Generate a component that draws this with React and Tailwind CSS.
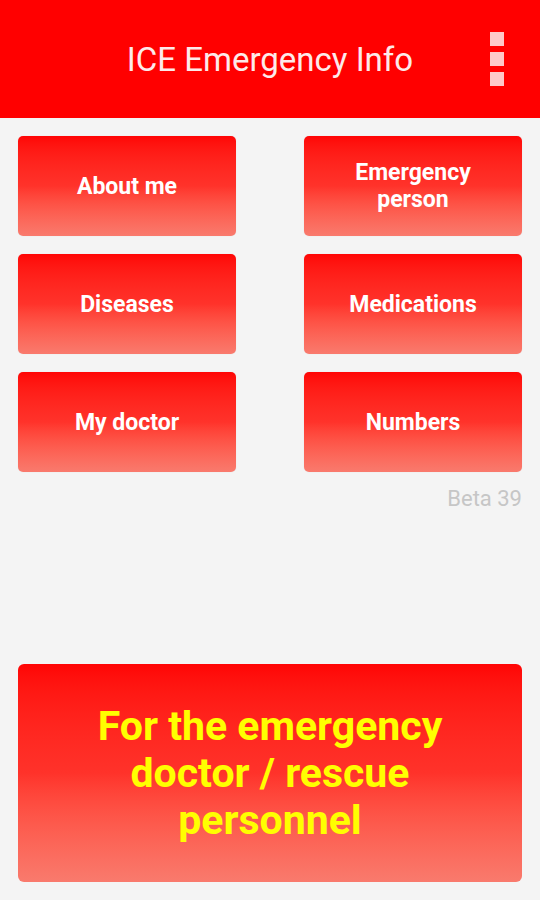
import React from "react";

function Btn({ children }) {
  return (
    <div className="h-[100px] rounded-[5px] bg-gradient-to-b from-[#ff0505] via-[#ff322a] via-[50%] to-[#f97a6d] flex items-center justify-center text-center text-white font-bold text-[23px] leading-[27px] shadow-[0_0_1px_rgba(0,0,0,0.15)]">
      {children}
    </div>
  );
}

export default function App() {
  return (
    <div className="w-[540px] h-[900px] bg-[#f4f4f4] flex flex-col" style={{ fontFamily: "Roboto, 'Noto Sans', sans-serif" }}>
      <div className="h-[118px] bg-[#ff0000] flex items-center relative shrink-0">
        <div className="flex-1 text-center text-[#fdeaea] text-[33px] pt-[2px]">ICE Emergency Info</div>
        <div className="absolute right-[36px] top-[32px] flex flex-col gap-[6px]">
          <div className="w-[14px] h-[14px] bg-[#ffc8c8]" />
          <div className="w-[14px] h-[14px] bg-[#ffc8c8]" />
          <div className="w-[14px] h-[14px] bg-[#ffc8c8]" />
        </div>
      </div>
      <div className="px-[18px] pt-[18px] grid grid-cols-[218px_218px] justify-between gap-y-[18px]">
        <Btn>About me</Btn>
        <Btn><span>Emergency<br />person</span></Btn>
        <Btn>Diseases</Btn>
        <Btn>Medications</Btn>
        <Btn>My doctor</Btn>
        <Btn>Numbers</Btn>
      </div>
      <div className="px-[18px] pt-[12px] text-right text-[#c6c6c6] text-[22px] leading-[30px]">Beta 39</div>
      <div className="flex-1" />
      <div className="mx-[18px] mb-[18px] h-[218px] rounded-[6px] bg-gradient-to-b from-[#ff0505] via-[#ff322a] via-[50%] to-[#f97a6d] flex items-center justify-center text-center text-[#ffff00] font-bold text-[41px] leading-[47px] px-[30px]">
        For the emergency doctor / rescue personnel
      </div>
    </div>
  );
}
